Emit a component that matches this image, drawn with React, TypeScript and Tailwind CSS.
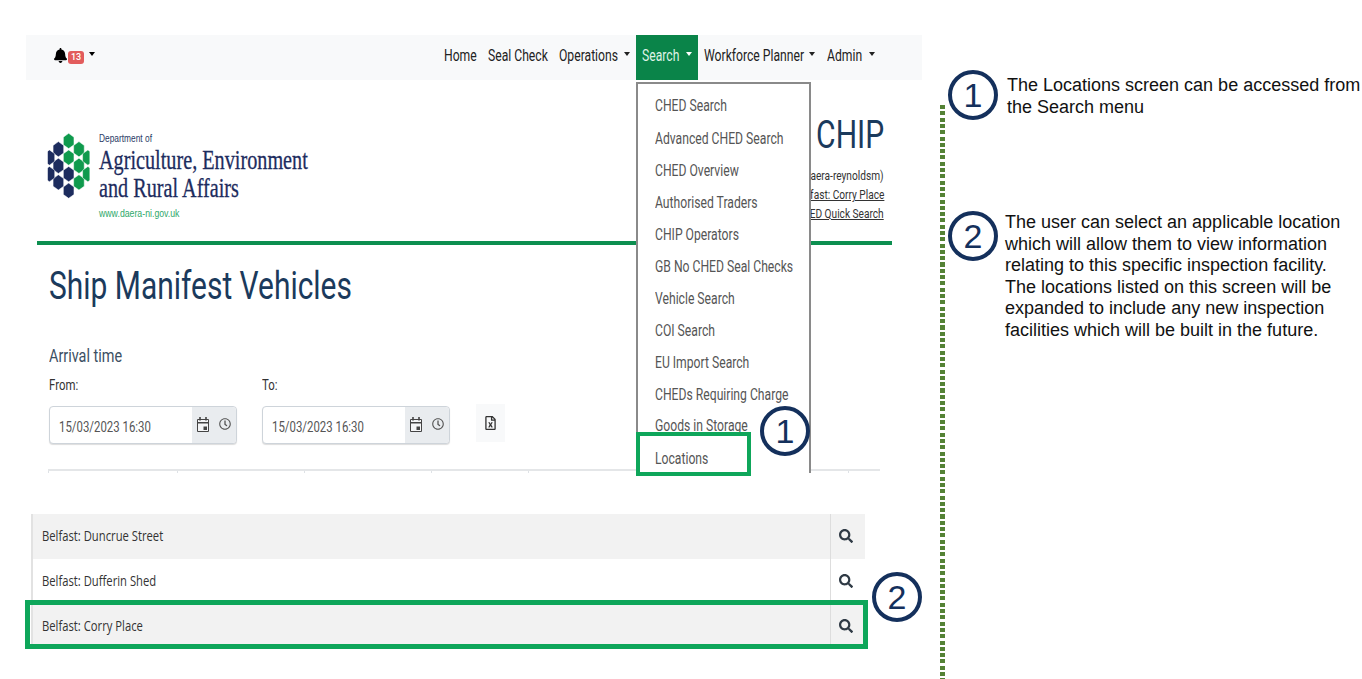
import type { ReactNode } from 'react';
import { FaBell, FaRegClock, FaRegFileExcel, FaSearch } from 'react-icons/fa';
import clsx from 'clsx';

const menuItems = [
  ['CHED Search', 'h-[34px]'],
  ['Advanced CHED Search', 'h-[32px]'],
  ['CHED Overview', 'h-[32px]'],
  ['Authorised Traders', 'h-[32px]'],
  ['CHIP Operators', 'h-[32px]'],
  ['GB No CHED Seal Checks', 'h-[32px]'],
  ['Vehicle Search', 'h-[32px]'],
  ['COI Search', 'h-[32px]'],
  ['EU Import Search', 'h-[32px]'],
  ['CHEDs Requiring Charge', 'h-[31px]'],
  ['Goods in Storage', 'h-[32px]'],
  ['Locations', 'h-[33px]'],
];

const navy = [[112, 355], [112, 405], [112, 455], [143, 430], [143, 480], [85, 380], [85, 430]];
const green = [[143, 330], [143, 380], [174, 355], [174, 405], [174, 455], [201, 380], [201, 430]];

function hexPoints(x: number, y: number) {
  const r = 23;
  const w = 16;
  return `${x},${y - r} ${x + w},${y - r / 2} ${x + w},${y + r / 2} ${x},${y + r} ${x - w},${y + r / 2} ${x - w},${y - r / 2}`;
}

// the source capture is squeezed horizontally, so text gets squeezed as well
function Sq({ className, children }: { className?: string; children: ReactNode }) {
  return <span className={clsx('inline-block origin-left scale-x-[0.76] whitespace-nowrap', className)}>{children}</span>;
}

function Caret({ className }: { className?: string }) {
  return <span className={clsx('h-0 w-0 border-x-[3.5px] border-t-[4px] border-x-transparent', className)} />;
}

function Circle({ n, className }: { n: number; className?: string }) {
  return (
    <div
      className={clsx(
        'flex h-[50px] w-[50px] items-center justify-center rounded-full border-[4px] border-[#14305c] bg-transparent font-["Liberation_Sans",sans-serif] text-[34px] leading-none text-[#14305c]',
        className,
      )}
    >
      {n}
    </div>
  );
}

function Logo() {
  return (
    <div className="flex items-start">
      <svg width="45" height="68" viewBox="75 300 135 205" className="mt-[51px] ml-[9px]">
        <defs>
          <clipPath id="logo-clip">
            <rect x="80" y="300" width="126" height="205" />
          </clipPath>
        </defs>
        <g clipPath="url(#logo-clip)">
          {navy.map(([x, y]) => (
            <polygon key={`${x}-${y}`} points={hexPoints(x, y)} fill="#1d2c5e" stroke="#fff" strokeWidth="1.5" />
          ))}
          {green.map(([x, y]) => (
            <polygon key={`${x}-${y}`} points={hexPoints(x, y)} fill="#0f9a4d" stroke="#fff" strokeWidth="1.5" />
          ))}
        </g>
      </svg>
      <div className="mt-[52px] ml-[8px] flex w-[215px] flex-col">
        <Sq className="h-[12px] font-['Liberation_Sans',sans-serif] text-[11px] leading-[12px] text-[#2a3a66]">Department of</Sq>
        <Sq className="mt-[2px] h-[28px] font-['Liberation_Serif',serif] text-[26.6px] leading-[28px] text-[#1d2c5e] [-webkit-text-stroke:0.3px_#1d2c5e]">Agriculture, Environment</Sq>
        <Sq className="h-[28px] font-['Liberation_Serif',serif] text-[26.6px] leading-[28px] text-[#1d2c5e] [-webkit-text-stroke:0.3px_#1d2c5e]">and Rural Affairs</Sq>
        <Sq className="mt-[4px] h-[14px] font-['Liberation_Sans',sans-serif] text-[11.5px] leading-[14px] text-[#2fa86a]">www.daera-ni.gov.uk</Sq>
      </div>
    </div>
  );
}

function CalendarIcon() {
  return (
    <svg width="12" height="15" viewBox="0 0 12 15" className="text-[#444]">
      <path d="M.5 2.5h11v12H.5z" fill="#f4f5f6" stroke="currentColor" />
      <path d="M0 5h12v1.5H0z" fill="currentColor" />
      <path d="M3 0v3.5M9 0v3.5" stroke="currentColor" strokeWidth="1.6" />
      <path d="M6.5 9.5h3.5v3.5H6.5z" fill="currentColor" />
    </svg>
  );
}

function DateField({ className }: { className?: string }) {
  return (
    <div className={clsx('flex h-[38px] w-[187.5px] rounded-[4px] border border-[#ced4da] bg-white shadow-[0_1px_1px_#ddd]', className)}>
      <div className="flex-1 pt-[10px] pl-[9px] text-[15px] leading-[20px] text-[#555]">
        <Sq>15/03/2023 16:30</Sq>
      </div>
      <div className="flex w-[44px] items-center gap-[10px] rounded-r-[4px] bg-[#e9ecef] pb-[2px] pl-[5.5px]">
        <CalendarIcon />
        <FaRegClock className="h-[12px] w-[12px] text-[#555]" />
      </div>
    </div>
  );
}

function LocationRow({ name, shaded, last }: { name: string; shaded?: boolean; last?: boolean }) {
  return (
    <div className={clsx('flex h-[45px] w-[834px] text-[#333]', shaded && 'bg-[#f2f2f2]', last && 'h-[44px]')}>
      <div className="flex-1 border-l-2 border-[#e2e2e2] pl-[9px] font-['Open_Sans',sans-serif] text-[14.8px] leading-[43px]">
        <Sq>{name}</Sq>
      </div>
      <div className="flex w-[35px] items-center justify-center border-l border-[#ddd] pr-[4px] pb-[2px]">
        <FaSearch className="h-[14px] w-[14px] text-[#2f3a45]" />
      </div>
    </div>
  );
}

export default function App() {
  return (
    <div className="flex h-[679px] w-[1362px] overflow-hidden bg-white font-['Roboto',sans-serif]">
      <div className="relative w-[940px] shrink-0 pt-[35px]">
        <nav className="ml-[26px] flex h-[45px] w-[896px] items-center bg-[#f8f9fa] pr-[47px] text-[16px] text-[#222]">
          <div className="ml-[28px] flex items-center">
            <FaBell className="mb-[5px] h-[15px] w-[13px] text-black" />
            <span className="ml-px rounded-[3px] bg-[#e25c5c] px-[3px] text-[9px] leading-[13px] font-medium text-white">13</span>
            <Caret className="mb-[8px] ml-[5px] border-t-black" />
          </div>
          <div className="ml-auto flex h-full items-center">
            <Sq className="w-[44px] pb-[4px]">Home</Sq>
            <Sq className="w-[71px] pb-[4px]">Seal Check</Sq>
            <Sq className="w-[65px] pb-[4px]">Operations</Sq>
            <Caret className="mb-[7px] border-t-[#222]" />
            <div className="ml-[6px] flex h-full w-[62px] items-center bg-[#0a8449] pl-[6px] text-[#dff3e7]">
              <Sq className="w-[44px] pb-[4px]">Search</Sq>
              <Caret className="mb-[7px] border-t-white" />
            </div>
            <Sq className="ml-[6px] w-[105px] pb-[4px]">Workforce Planner</Sq>
            <Caret className="mb-[7px] border-t-[#222]" />
            <Sq className="ml-[12px] w-[42px] pb-[4px]">Admin</Sq>
            <Caret className="mb-[7px] border-t-[#222]" />
          </div>
        </nav>

        <header className="relative ml-[37px] flex h-[165px] w-[855px] border-b-[4px] border-[#0d8f50]">
          <Logo />
          <div className="ml-auto flex w-[200px] flex-col items-end pt-[35px] pr-[8px] text-[#333]">
            <span className="inline-block origin-right scale-x-[0.79] text-[38px] leading-[40px] whitespace-nowrap text-[#1b3a5c]">CHIP</span>
            <span className="mt-[12px] inline-block origin-right scale-x-[0.78] text-[13px] leading-[18px] whitespace-nowrap">Logged in as (daera-reynoldsm)</span>
            <span className="mt-px inline-block origin-right scale-x-[0.78] text-[13px] leading-[18px] whitespace-nowrap underline">Belfast: Corry Place</span>
            <span className="mt-px inline-block origin-right scale-x-[0.78] text-[13px] leading-[18px] whitespace-nowrap underline">CHED Quick Search</span>
          </div>
        </header>

        <section className="ml-[49px]">
          <h1 className="mt-[16px] h-[50px] text-[39.4px] leading-[50px] text-[#1b3a5c]">
            <Sq>Ship Manifest Vehicles</Sq>
          </h1>
          <div className="mt-[33px] h-[24px] text-[19px] leading-[24px] text-[#3c4f63]">
            <Sq>Arrival time</Sq>
          </div>
          <div className="mt-[7px] flex h-[20px] text-[15px] leading-[20px] text-[#333]">
            <Sq className="w-[213px]">From:</Sq>
            <Sq>To:</Sq>
          </div>
          <div className="mt-[11px] flex items-start">
            <DateField />
            <DateField className="ml-[25.5px]" />
            <div className="mt-[-2px] ml-[26px] flex h-[38px] w-[29px] items-center justify-center bg-[#f8f9fa]">
              <FaRegFileExcel className="h-[14px] w-[11px] text-[#333]" />
            </div>
          </div>
        </section>

        <div className="mt-[25px] ml-[48px] flex h-[4px] w-[832px] border-t-2 border-[#e4e6e8]">
          <div className="w-[129px] border-l border-[#dee2e6]" />
          <div className="w-[127px] border-l border-[#dee2e6]" />
          <div className="w-[127px] border-l border-[#dee2e6]" />
          <div className="w-[97px] border-l border-[#dee2e6]" />
          <div className="w-[320px] border-l border-[#dee2e6]" />
          <div className="border-l border-[#dee2e6]" />
        </div>

        <div className="mt-[41px] ml-[31px]">
          <LocationRow name="Belfast: Duncrue Street" shaded />
          <LocationRow name="Belfast: Dufferin Shed" last />
          <LocationRow name="Belfast: Corry Place" shaded />
        </div>

        <div className="absolute top-[82px] left-[636px] h-[391px] w-[175px] border-x-2 border-t-2 border-[#8a8a8a] bg-white pt-[5px] pl-[17px] text-[16px] text-[#555]">
          {menuItems.map(([label, height]) => (
            <div key={label} className={clsx('flex items-center', height)}>
              <Sq>{label}</Sq>
            </div>
          ))}
        </div>
        <div className="absolute top-[432px] left-[636px] h-[44px] w-[115px] border-[4px] border-[#0ea65a]" />
        <div className="absolute top-[600px] left-[25px] h-[49px] w-[843px] border-[5px] border-[#0ea65a]" />
        <Circle n={1} className="absolute top-[406px] left-[760px]" />
        <Circle n={2} className="absolute top-[572px] left-[872px]" />
      </div>

      <div className="mt-[105px] h-[574px] w-[5px] shrink-0 bg-[repeating-linear-gradient(to_bottom,#548235_0,#548235_4px,transparent_4px,transparent_6.3px)]" />

      <aside className="font-['Liberation_Sans',sans-serif] text-[18px] leading-[21.5px] text-[#111]">
        <div className="mt-[70px] ml-[3px] flex">
          <Circle n={1} className="shrink-0" />
          <p className="mt-[5px] ml-[9px] w-[356px]">The Locations screen can be accessed from the Search menu</p>
        </div>
        <div className="mt-[91px] ml-[3px] flex">
          <Circle n={2} className="shrink-0" />
          <p className="mt-px ml-[7px] w-[345px]">
            The user can select an applicable location which will allow them to view information relating to this specific inspection facility. The locations listed on this screen will be expanded to include any new inspection facilities which will be built in the future.
          </p>
        </div>
      </aside>
    </div>
  );
}
